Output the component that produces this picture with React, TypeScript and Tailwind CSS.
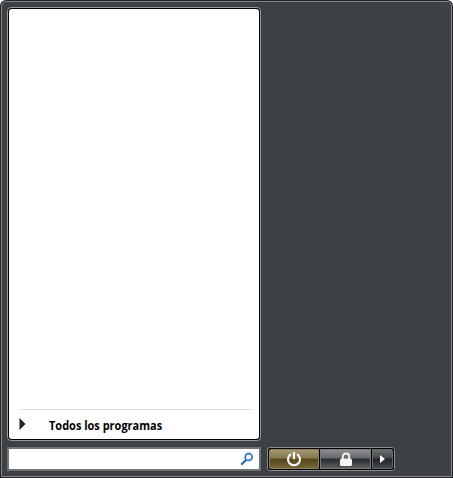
import React from "react";

function SearchIcon() {
  return (
    <svg width="14" height="14" viewBox="0 0 14 14" fill="none">
      <path d="M1.9 12.1 6 8" stroke="#2c5ba5" strokeWidth="2.1" strokeLinecap="round" />
      <circle cx="8.7" cy="5" r="3.5" stroke="#397bc8" strokeWidth="1.8" fill="#f4faff" />
    </svg>
  );
}

function PowerIcon() {
  return (
    <svg width="16" height="16" viewBox="0 0 16 16" fill="none" stroke="#fff" strokeWidth="2.1">
      <path d="M4.8 3.2a6 6 0 1 0 6.4 0" />
      <path d="M8 1v7.2" />
    </svg>
  );
}

function LockIcon() {
  return (
    <svg width="14" height="16" viewBox="0 0 14 16">
      <path d="M3.8 8V5.7a3.2 3.2 0 0 1 6.4 0V8" fill="none" stroke="#f6f6f6" strokeWidth="1.8" />
      <path d="M2.2 7.5h9.6l1.2 1.2v5.1L12 15H2l-1-1.2V8.7z" fill="#f6f6f6" />
    </svg>
  );
}

export default function App() {
  return (
    <main className="h-[478px] w-[453px] rounded-t-[6px] bg-[#202226] p-px font-['Open_Sans','Noto_Sans',sans-serif]">
      <div className="h-[476px] w-[451px] rounded-t-[5px] border border-[#85888d] bg-[#3d4144] pl-[5px] pt-[5px]">
        <section className="flex h-[434px] w-[254px] flex-col justify-end rounded-[4px] border border-[#989b9e] bg-black p-px">
          <div className="flex h-full flex-col justify-end rounded-[3px] bg-white">
            <div className="ml-[11px] mr-[7px] h-px bg-[#dfdfdf]" />
            <button className="flex h-[29px] items-center pl-[10px] text-left">
              <svg width="7" height="12" viewBox="0 0 7 12" className="-mt-[1px]">
                <path d="M.5 0 6.5 6l-6 6z" fill="#222" />
              </svg>
              <span className="ml-[23px] mt-[3px] origin-left scale-x-[0.915] text-[12px] font-bold leading-[16px] text-black">
                Todos los programas
              </span>
            </button>
          </div>
        </section>
        <div className="mt-[6px] flex gap-[6px]">
          <label className="flex h-[24px] w-[254px] items-center justify-end border-2 border-[#707477] bg-white pr-[5px]">
            <SearchIcon />
          </label>
          <div className="flex h-[24px] w-[128px] rounded-[3px] border border-[#8b8e90] bg-black p-px">
            <button className="flex w-[50px] items-center justify-center rounded-l-[2px] border border-[#8d8056] bg-[linear-gradient(to_bottom,#a29873_0%,#85784e_45%,#57451c_50%,#76653b_100%)]">
              <PowerIcon />
            </button>
            <button className="ml-px flex w-[51px] items-center justify-center border border-[#777a7c] bg-[linear-gradient(to_bottom,#8c8f91_0%,#65686a_45%,#292c2e_50%,#5b5e60_100%)]">
              <LockIcon />
            </button>
            <button className="ml-px flex w-[21px] items-center justify-center rounded-r-[2px] border border-[#65686a] bg-[linear-gradient(to_bottom,#6c6f71_0%,#45484a_45%,#202325_50%,#484b4d_100%)]">
              <svg width="5" height="8" viewBox="0 0 5 8"><path d="M0 0 5 4 0 8z" fill="#fff" /></svg>
            </button>
          </div>
        </div>
      </div>
    </main>
  );
}
